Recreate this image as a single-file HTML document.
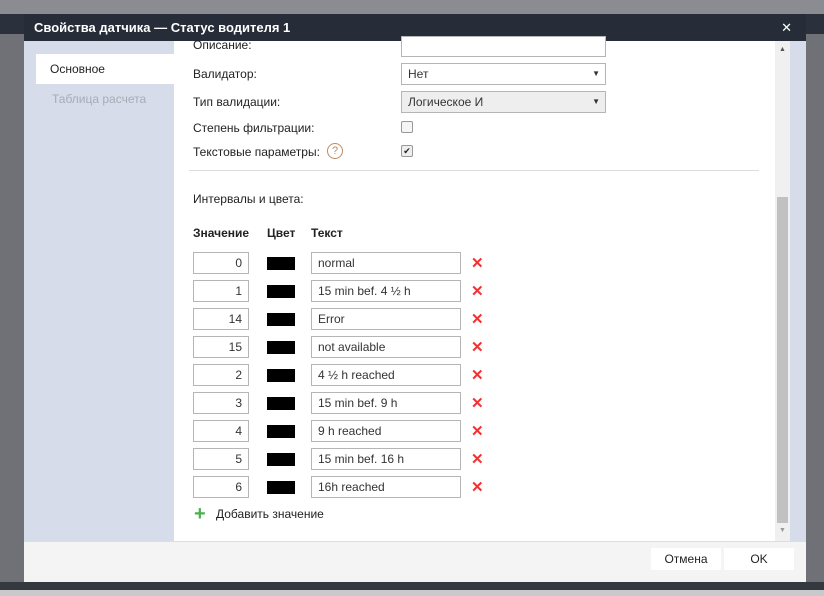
<!DOCTYPE html>
<html><head><meta charset="utf-8"><style>
body{margin:0;width:824px;height:596px;background:#6f7177;font-family:"Liberation Sans",sans-serif;font-size:12px;color:#222;position:relative;overflow:hidden}
.abs{position:absolute}
.hdr{left:24px;top:14px;width:782px;height:27px;background:#262d38;color:#fff;font-weight:bold;font-size:13px;line-height:27px}
.inp{position:absolute;border:1px solid #b5b5b5;background:#fff;box-sizing:border-box;height:22px;line-height:20px;padding:0 6px;font-size:12px;color:#333}
.sw{position:absolute;width:28px;height:13px;background:#000}
.x{position:absolute;color:#e33;font-size:15px;font-weight:bold}
</style></head><body>
<div class="abs" style="left:0;top:0;width:824px;height:14px;background:#8a8c92"></div>
<div class="abs" style="left:0;top:14px;width:824px;height:20px;background:#2a313c"></div>
<div class="abs" style="left:0;top:582px;width:824px;height:8px;background:#34383f"></div>
<div class="abs" style="left:0;top:590px;width:824px;height:6px;background:#c9c9cc"></div>
<div class="abs hdr"><span style="margin-left:10px">Свойства датчика — Статус водителя 1</span><span style="position:absolute;right:14px;font-weight:normal">✕</span></div>
<div class="abs" style="left:24px;top:41px;width:150px;height:500px;background:#d6dcea"></div>
<div class="abs" style="left:36px;top:54px;width:138px;height:30px;background:#fff;line-height:30px;padding-left:14px;box-sizing:border-box">Основное</div>
<div class="abs" style="left:52px;top:92px;color:#a8acb6">Таблица расчета</div>
<div class="abs" style="left:174px;top:41px;width:601px;height:500px;background:#fff"></div>
<div class="abs" style="left:775px;top:41px;width:15px;height:500px;background:#f0f0f0"></div>
<div class="abs" style="left:777px;top:197px;width:11px;height:326px;background:#c1c1c1"></div>
<div class="abs" style="left:779px;top:46px;font-size:7px;color:#555">▲</div>
<div class="abs" style="left:779px;top:527px;font-size:7px;color:#999">▼</div>
<div class="abs" style="left:790px;top:41px;width:16px;height:500px;background:#d6dcea"></div>
<div class="abs" style="left:24px;top:541px;width:782px;height:41px;background:#f4f4f4;border-top:1px solid #ddd;box-sizing:border-box"></div>
<div class="abs" style="left:651px;top:548px;width:70px;height:22px;background:#fff;text-align:center;line-height:22px">Отмена</div>
<div class="abs" style="left:724px;top:548px;width:70px;height:22px;background:#fff;text-align:center;line-height:22px">OK</div>

<div class="abs" style="left:193px;top:38px">Описание:</div>
<div class="inp" style="left:401px;top:36px;width:205px;height:21px"></div>
<div class="abs" style="left:193px;top:67px">Валидатор:</div>
<div class="inp" style="left:401px;top:63px;width:205px">Нет<span style="position:absolute;right:5px;font-size:8px">▼</span></div>
<div class="abs" style="left:193px;top:95px">Тип валидации:</div>
<div class="inp" style="left:401px;top:91px;width:205px;background:#eee">Логическое И<span style="position:absolute;right:5px;font-size:8px">▼</span></div>
<div class="abs" style="left:193px;top:121px">Степень фильтрации:</div>
<div class="abs" style="left:401px;top:121px;width:10px;height:10px;border:1px solid #999;border-radius:2px;background:#f5f5f5"></div>
<div class="abs" style="left:193px;top:145px">Текстовые параметры:</div>
<div class="abs" style="left:327px;top:143px;width:14px;height:14px;border:1px solid #c08a60;border-radius:50%;color:#c08a60;font-size:11px;text-align:center;line-height:14px">?</div>
<div class="abs" style="left:401px;top:145px;width:10px;height:10px;border:1px solid #999;border-radius:2px;background:#eee;font-size:9px;line-height:10px;text-align:center">✔</div>
<div class="abs" style="left:189px;top:170px;width:570px;height:1px;background:#ddd"></div>
<div class="abs" style="left:193px;top:192px">Интервалы и цвета:</div>
<div class="abs" style="left:193px;top:226px;font-weight:bold">Значение</div>
<div class="abs" style="left:267px;top:226px;font-weight:bold">Цвет</div>
<div class="abs" style="left:311px;top:226px;font-weight:bold">Текст</div>
<div id="rows"></div>
<div class="abs" style="left:194px;top:505px;color:#4caf50;font-size:20px;font-weight:bold;line-height:18px">+</div>
<div class="abs" style="left:216px;top:507px">Добавить значение</div>
<script>
var d=[["0","normal"],["1","15 min bef. 4 ½ h"],["14","Error"],["15","not available"],["2","4 ½ h reached"],["3","15 min bef. 9 h"],["4","9 h reached"],["5","15 min bef. 16 h"],["6","16h reached"]],h="";
d.forEach(function(r,i){var y=252+i*28;
h+='<div class="inp" style="left:193px;top:'+y+'px;width:56px;text-align:right">'+r[0]+'</div><div class="sw" style="left:267px;top:'+(y+5)+'px"></div><div class="inp" style="left:311px;top:'+y+'px;width:150px">'+r[1]+'</div><div class="x" style="left:471px;top:'+(y+2)+'px">✕</div>';});
document.getElementById("rows").innerHTML=h;
</script>
</body></html>
